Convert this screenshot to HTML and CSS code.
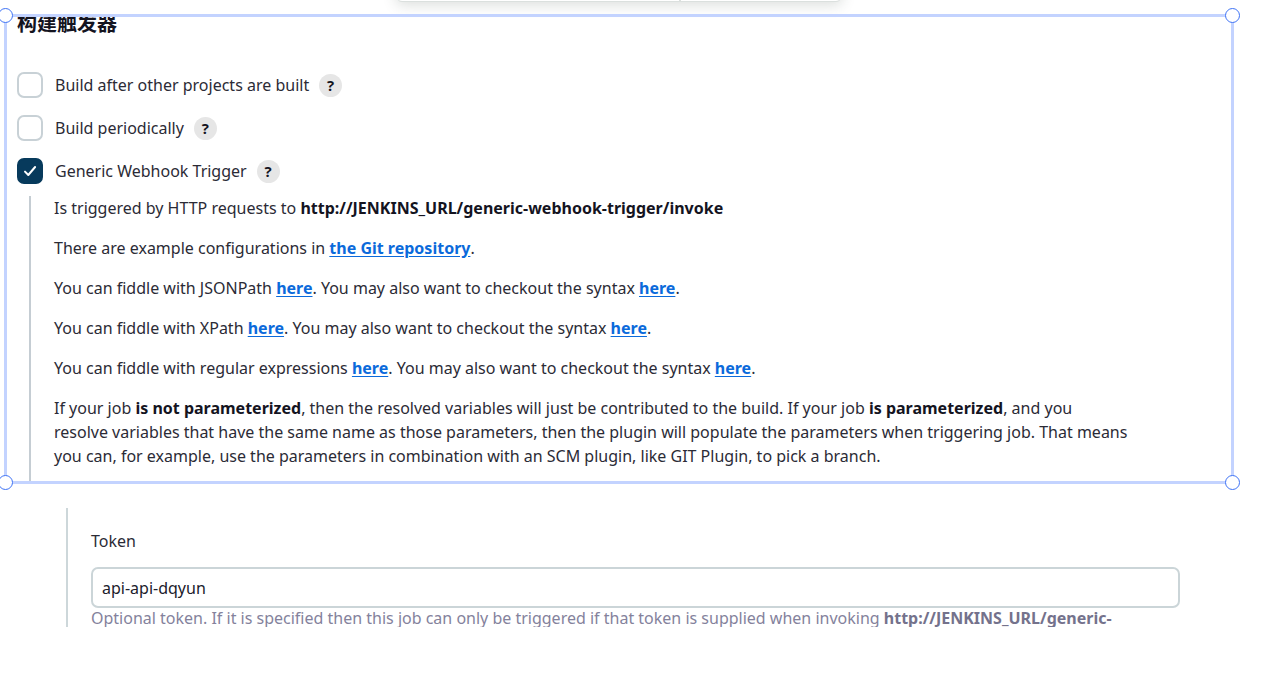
FILE: index.html
```
<!DOCTYPE html>
<html lang="zh-CN">
<head>
<meta charset="utf-8">
<title>构建触发器</title>
<link rel="stylesheet" href="styles.css">
</head>
<body>
<div class="toolbar"><span class="toolbar-part"></span><span class="toolbar-part"></span></div>
<main class="page">
  <section class="frame">
    <div class="frame-content">
      <h2 class="title">构建触发器</h2>
      <div class="options">
        <div class="option">
          <input class="check" type="checkbox" id="after">
          <label for="after">Build after other projects are built</label>
          <button class="help" type="button">?</button>
        </div>
        <div class="option">
          <input class="check" type="checkbox" id="periodic">
          <label for="periodic">Build periodically</label>
          <button class="help" type="button">?</button>
        </div>
        <div class="option">
          <span class="check-wrap">
            <input class="check" type="checkbox" id="webhook" checked>
            <svg class="tick" viewBox="0 0 26 26" aria-hidden="true"><path d="M8 13.6l3.3 3.4 6.8-8"/></svg>
          </span>
          <label for="webhook">Generic Webhook Trigger</label>
          <button class="help" type="button">?</button>
        </div>
      </div>
      <div class="details">
        <p>Is triggered by HTTP requests to <b>http://JENKINS_URL/generic-webhook-trigger/invoke</b></p>
        <p>There are example configurations in <a href="#">the Git repository</a>.</p>
        <p>You can fiddle with JSONPath <a href="#">here</a>. You may also want to checkout the syntax <a href="#">here</a>.</p>
        <p>You can fiddle with XPath <a href="#">here</a>. You may also want to checkout the syntax <a href="#">here</a>.</p>
        <p>You can fiddle with regular expressions <a href="#">here</a>. You may also want to checkout the syntax <a href="#">here</a>.</p>
        <p>If your job <b>is not parameterized</b>, then the resolved variables will just be contributed to the build. If your job <b>is parameterized</b>, and you<br>resolve variables that have the same name as those parameters, then the plugin will populate the parameters when triggering job. That means<br>you can, for example, use the parameters in combination with an SCM plugin, like GIT Plugin, to pick a branch.</p>
      </div>
    </div>
    <span class="handle top left"></span>
    <span class="handle top right"></span>
    <span class="handle bottom left"></span>
    <span class="handle bottom right"></span>
  </section>
  <section class="token">
    <label class="token-label" for="token">Token</label>
    <input class="token-input" type="text" id="token" value="api-api-dqyun">
    <p class="token-hint">Optional token. If it is specified then this job can only be triggered if that token is supplied when invoking <b>http://JENKINS_URL/generic-</b></p>
  </section>
</main>
</body>
</html>
```
FILE: styles.css
```
* { box-sizing: border-box; }
body {
  margin: 0;
  background: #fff;
  color: #2b2b36;
  font-family: "Noto Sans", "Noto Sans CJK SC", sans-serif;
  font-size: 16px;
  line-height: 24px;
  overflow-x: hidden;
}
p { margin: 0; }
b { color: #14141f; font-weight: 700; }
a { color: #0b6adb; font-weight: 700; text-underline-offset: 2px; }

.toolbar {
  position: absolute;
  top: -38px;
  left: 396px;
  width: 446px;
  height: 40px;
  display: flex;
  border: 1px solid #dbe0de;
  border-radius: 6px;
  background: #fff;
  box-shadow: 0 3px 14px rgba(40, 60, 50, 0.17);
}
.toolbar-part { flex: 283; }
.toolbar-part + .toolbar-part { flex: 161; border-left: 2px solid #dbe0de; }

.page { padding: 14px 53px 0 4px; }

.frame {
  position: relative;
  border: 3px solid #c3d3ff;
}
.frame-content { overflow: hidden; padding: 0 10px; }
.title {
  margin: -6px 0 37px;
  font-size: 20px;
  line-height: 24px;
  font-weight: 700;
  color: #14141f;
  font-family: "Noto Sans CJK SC", sans-serif;
}
.options { display: flex; flex-direction: column; gap: 17px; padding-bottom: 12px; }
.option { display: flex; align-items: center; height: 26px; }
.option label { margin: 0 10px 0 12px; }
.check {
  appearance: none;
  display: block;
  width: 26px;
  height: 26px;
  margin: 0;
  border: 2px solid #c8d1d6;
  border-radius: 7px;
  background: #fff;
}
.check:checked { background: #073a5c; border-color: #073a5c; }
.check-wrap { position: relative; }
.tick {
  position: absolute;
  inset: 0;
  pointer-events: none;
  fill: none;
  stroke: #fff;
  stroke-width: 2;
  stroke-linecap: round;
  stroke-linejoin: round;
}
.help {
  width: 23px;
  height: 23px;
  padding: 0;
  border: 0;
  border-radius: 50%;
  background: #e6e6e6;
  color: #14141f;
  font: 700 15px/23px "Open Sans", sans-serif;
}
.details {
  display: flex;
  flex-direction: column;
  gap: 16px;
  margin-left: 12px;
  padding: 0 0 13px 23px;
  border-left: 2px solid #c5cdd3;
  white-space: nowrap;
}

.handle {
  position: absolute;
  width: 15px;
  height: 15px;
  border: 1px solid #3f73f5;
  border-radius: 50%;
  background: #fff;
}
.top { top: -9px; }
.bottom { bottom: -9px; }
.left { left: -9px; }
.right { right: -9px; }

.token {
  display: flex;
  flex-direction: column;
  height: 119px;
  margin: 24px 0 0 62px;
  padding: 21px 54px 0 23px;
  border-left: 2px solid #cdd7da;
  overflow: hidden;
}
.token-label { margin-bottom: 14px; }
.token-input {
  flex: none;
  width: 100%;
  height: 41px;
  padding: 0 9px;
  border: 2px solid #cbd5d8;
  border-radius: 7px;
  background: #fff;
  color: #20202b;
  font: inherit;
}
.token-hint { color: #84829c; white-space: nowrap; line-height: 20px; }
.token-hint b { color: #74728c; }
```
